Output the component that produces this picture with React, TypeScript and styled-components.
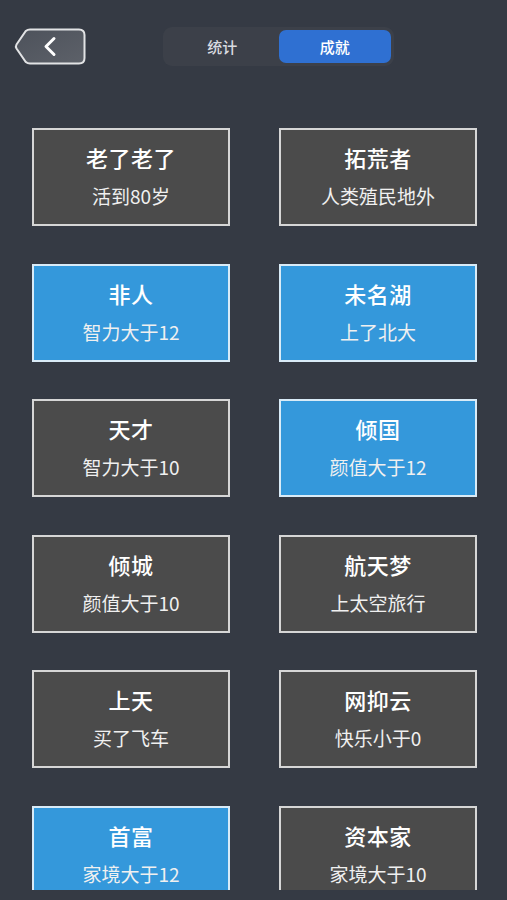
import styled, { createGlobalStyle } from "styled-components";

const GlobalStyle = createGlobalStyle`
  html, body {
    margin: 0;
    padding: 0;
    background: #353a44;
  }
  body {
    font-family: "Noto Sans CJK SC", "Noto Sans", sans-serif;
  }
`;

const Screen = styled.div`
  width: 507px;
  height: 900px;
  background: #353a44;
  display: flex;
  flex-direction: column;
  overflow: hidden;
`;

const Header = styled.div`
  display: flex;
  align-items: flex-start;
  height: 90px;
  padding: 27px 0 0 14px;
  box-sizing: border-box;
`;

const BackButton = styled.button`
  width: 72px;
  height: 37px;
  margin-top: 1px;
  padding: 0;
  border: none;
  background: none;
  cursor: pointer;
  display: block;
`;

const Segmented = styled.div`
  margin-left: 77px;
  width: 231px;
  height: 39px;
  box-sizing: border-box;
  padding: 3px;
  border-radius: 9px;
  background: #3c4049;
  display: flex;
`;

const Tab = styled.div<{ $active?: boolean }>`
  flex: 1;
  display: flex;
  align-items: center;
  justify-content: center;
  border-radius: 7px;
  font-size: 15px;
  font-weight: 500;
  color: ${(p) => (p.$active ? "#ffffff" : "#d9dbe0")};
  background: ${(p) => (p.$active ? "#2f70d2" : "transparent")};
`;

const List = styled.div`
  height: 800px;
  overflow: hidden;
  padding: 38px 31px 0 32px;
  box-sizing: border-box;
  display: grid;
  grid-template-columns: 198px 198px;
  grid-auto-rows: 98px;
  column-gap: 49px;
  row-gap: 37.5px;
  align-content: start;
`;

const Card = styled.div<{ $done?: boolean }>`
  box-sizing: border-box;
  border: 2px solid ${(p) => (p.$done ? "#d9ebf7" : "#d6d6d6")};
  background: ${(p) => (p.$done ? "#3498db" : "#4b4b4b")};
  display: flex;
  flex-direction: column;
  align-items: center;
  padding-top: 12px;
  gap: 12px;
  color: #ffffff;
`;

const Title = styled.div`
  font-size: 22px;
  font-weight: 500;
  line-height: 30px;
  letter-spacing: 0.5px;
`;

const Desc = styled.div`
  font-size: 19px;
  line-height: 24px;
  color: #f0f0f0;
`;

const achievements = [
  { title: "老了老了", desc: "活到80岁", done: false },
  { title: "拓荒者", desc: "人类殖民地外", done: false },
  { title: "非人", desc: "智力大于12", done: true },
  { title: "未名湖", desc: "上了北大", done: true },
  { title: "天才", desc: "智力大于10", done: false },
  { title: "倾国", desc: "颜值大于12", done: true },
  { title: "倾城", desc: "颜值大于10", done: false },
  { title: "航天梦", desc: "上太空旅行", done: false },
  { title: "上天", desc: "买了飞车", done: false },
  { title: "网抑云", desc: "快乐小于0", done: false },
  { title: "首富", desc: "家境大于12", done: true },
  { title: "资本家", desc: "家境大于10", done: false },
];

function BackIcon() {
  return (
    <svg width="72" height="37" viewBox="0 0 72 37">
      <defs>
        <linearGradient id="bk" x1="0" y1="0" x2="1" y2="1">
          <stop offset="0" stopColor="#4d525b" />
          <stop offset="1" stopColor="#5d6169" />
        </linearGradient>
      </defs>
      <path
        d="M16 1.5 H65 Q70.5 1.5 70.5 7 V30 Q70.5 35.5 65 35.5 H16 Q13.5 35.5 11.8 34 L2.5 20.5 Q1.3 18.5 2.5 16.5 L11.8 3 Q13.5 1.5 16 1.5 Z"
        fill="url(#bk)"
        stroke="#e2e3e5"
        strokeWidth="2"
      />
      <path
        d="M40 10.5 L32 18.5 L40 26.5"
        fill="none"
        stroke="#ffffff"
        strokeWidth="3"
        strokeLinecap="round"
        strokeLinejoin="round"
      />
    </svg>
  );
}

export default function App() {
  return (
    <Screen>
      <GlobalStyle />
      <Header>
        <BackButton aria-label="back">
          <BackIcon />
        </BackButton>
        <Segmented>
          <Tab>统计</Tab>
          <Tab $active>成就</Tab>
        </Segmented>
      </Header>
      <List>
        {achievements.map((a) => (
          <Card key={a.title} $done={a.done}>
            <Title>{a.title}</Title>
            <Desc>{a.desc}</Desc>
          </Card>
        ))}
      </List>
    </Screen>
  );
}
